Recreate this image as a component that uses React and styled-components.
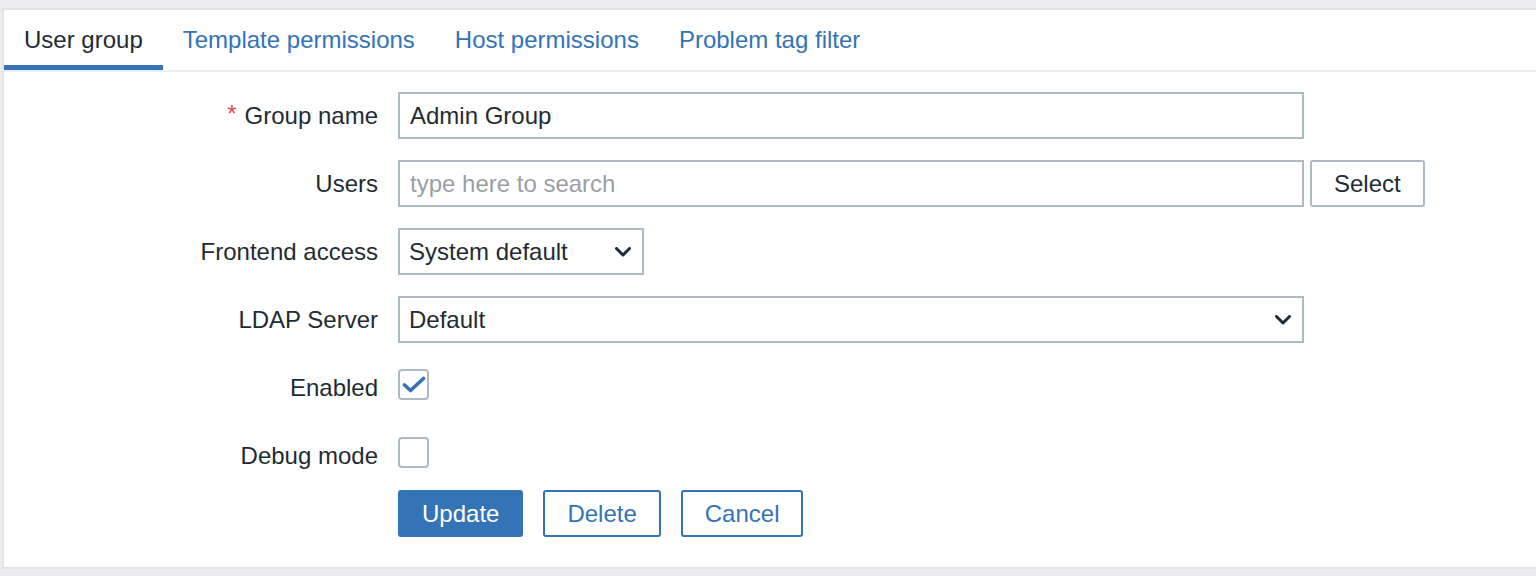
import React from "react";
import styled, { createGlobalStyle } from "styled-components";

const Global = createGlobalStyle`
  html, body { margin: 0; padding: 0; background: #ebedef; overflow: hidden; }
  body { font-family: Arial, "Liberation Sans", sans-serif; color: #1f2c33; }
  * { box-sizing: border-box; }
`;

const BLUE = "#3373b6";
const BORDER = "#acbbc2";

const Page = styled.div`
  padding: 8px 0 0 2px;
  height: 576px;
`;

const Card = styled.div`
  background: #fff;
  border: 2px solid #e0e4e7;
  border-right: none;
  height: 561px;
  margin-right: -10px;
`;

const TabBar = styled.div`
  display: flex;
  border-bottom: 2px solid #ebeef0;
  height: 62px;
`;

const Tab = styled.div`
  height: 60px;
  padding: 5px 20px 0;
  display: flex;
  align-items: center;
  font-size: 24px;
  color: ${(p) => (p.$active ? "#1f2c33" : BLUE)};
  border-bottom: 5px solid ${(p) => (p.$active ? BLUE : "transparent")};
`;

const Form = styled.div`
  display: grid;
  grid-template-columns: 374px 1fr;
  column-gap: 20px;
  row-gap: 21px;
  padding-top: 20px;
`;

const Label = styled.div`
  font-size: 24px;
  height: 47px;
  padding-top: 1px;
  display: flex;
  align-items: center;
  justify-content: flex-end;
  color: #1f2c33;
`;

const Asterisk = styled.span`
  color: #d64e4e;
  margin-right: 8px;
  position: relative;
  top: -2px;
`;

const Field = styled.div`
  display: flex;
  align-items: ${(p) => (p.$top ? "flex-start" : "center")};
  gap: 6px;
  height: 47px;
`;

const TextBox = styled.div`
  width: ${(p) => p.$w}px;
  height: 47px;
  border: 2px solid ${BORDER};
  padding: 1px 10px 0;
  display: flex;
  align-items: center;
  font-size: 24px;
  color: ${(p) => (p.$placeholder ? "#9a9fa3" : "#1f2c33")};
`;

const SelectBox = styled(TextBox)`
  justify-content: space-between;
  padding: 1px 10px 0 9px;
`;

const Chevron = () => (
  <svg width="16" height="10" viewBox="0 0 16 10" style={{ marginRight: 1, marginTop: -1 }}>
    <path d="M1.5 1.5 L8 8 L14.5 1.5" fill="none" stroke="#1f2c33" strokeWidth="3" strokeLinecap="round" strokeLinejoin="round" />
  </svg>
);

const Button = styled.div`
  height: 47px;
  padding: 1px 22px 0;
  border: 2px solid ${(p) => (p.$primary || p.$blue ? BLUE : BORDER)};
  border-radius: 3px;
  background: ${(p) => (p.$primary ? BLUE : "#fff")};
  color: ${(p) => (p.$primary ? "#fff" : p.$blue ? BLUE : "#1f2c33")};
  font-size: 24px;
  display: flex;
  align-items: center;
  justify-content: center;
`;

const Buttons = styled.div`
  display: flex;
  gap: 20px;
  margin-top: -10px;
`;

const Check = styled.div`
  width: 31px;
  height: 31px;
  border: 2px solid ${BORDER};
  border-radius: 4px;
  margin-top: 5px;
  display: flex;
  align-items: center;
  justify-content: center;
`;

const CheckMark = () => (
  <svg width="24" height="18" viewBox="0 0 24 18">
    <path d="M2.5 9 L8.5 14.5 L21.5 2.5" fill="none" stroke={BLUE} strokeWidth="3.6" strokeLinecap="round" strokeLinejoin="round" />
  </svg>
);

export default function App() {
  return (
    <>
      <Global />
      <Page>
        <Card>
          <TabBar>
            <Tab $active>User group</Tab>
            <Tab>Template permissions</Tab>
            <Tab>Host permissions</Tab>
            <Tab>Problem tag filter</Tab>
          </TabBar>
          <Form>
            <Label><Asterisk>*</Asterisk>Group name</Label>
            <Field><TextBox $w={906}>Admin Group</TextBox></Field>

            <Label>Users</Label>
            <Field>
              <TextBox $w={906} $placeholder>type here to search</TextBox>
              <Button>Select</Button>
            </Field>

            <Label>Frontend access</Label>
            <Field>
              <SelectBox $w={246}>System default<Chevron /></SelectBox>
            </Field>

            <Label>LDAP Server</Label>
            <Field>
              <SelectBox $w={906}>Default<Chevron /></SelectBox>
            </Field>

            <Label>Enabled</Label>
            <Field $top>
              <Check><CheckMark /></Check>
            </Field>

            <Label>Debug mode</Label>
            <Field $top>
              <Check />
            </Field>

            <div />
            <Buttons>
              <Button $primary>Update</Button>
              <Button $blue>Delete</Button>
              <Button $blue>Cancel</Button>
            </Buttons>
          </Form>
        </Card>
      </Page>
    </>
  );
}
